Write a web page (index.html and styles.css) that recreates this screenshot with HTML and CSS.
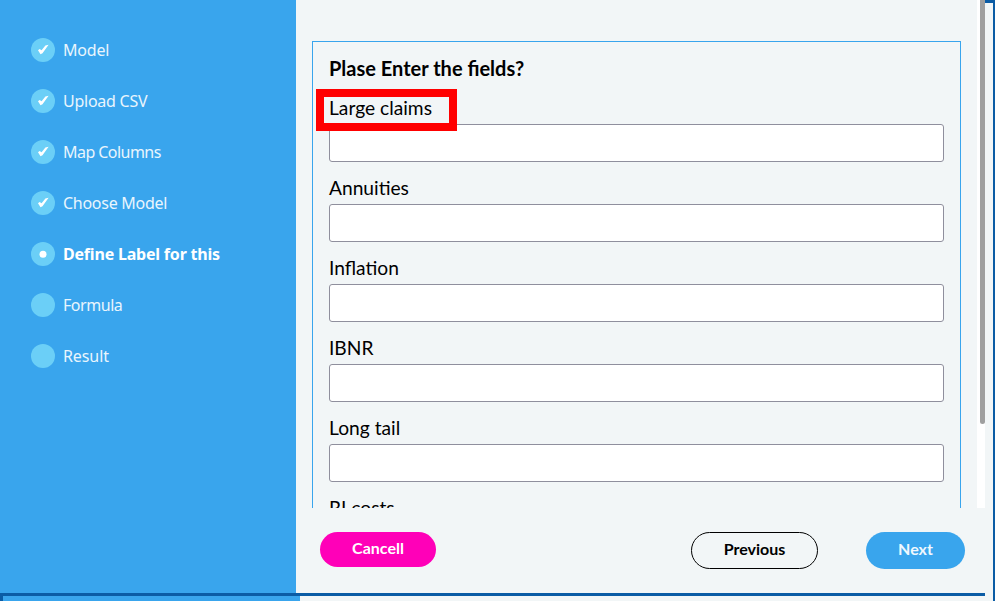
FILE: index.html
```html
<!DOCTYPE html>
<html lang="en">
<head>
<meta charset="utf-8">
<title>Define Label</title>
<link rel="stylesheet" href="styles.css">
</head>
<body>
<div class="page">
  <div class="wizard">
    <nav class="steps">
      <div class="step"><span class="dot"><svg viewBox="0 0 24 24"><path d="M7 12.2 8.6 11 10.6 12.2 14.4 7.4 17.6 6.8 11.5 15.2 9.5 16.2Z"/></svg></span><span class="name n1">Model</span></div>
      <div class="step"><span class="dot"><svg viewBox="0 0 24 24"><path d="M7 12.2 8.6 11 10.6 12.2 14.4 7.4 17.6 6.8 11.5 15.2 9.5 16.2Z"/></svg></span><span class="name n2">Upload CSV</span></div>
      <div class="step"><span class="dot"><svg viewBox="0 0 24 24"><path d="M7 12.2 8.6 11 10.6 12.2 14.4 7.4 17.6 6.8 11.5 15.2 9.5 16.2Z"/></svg></span><span class="name n3">Map Columns</span></div>
      <div class="step"><span class="dot"><svg viewBox="0 0 24 24"><path d="M7 12.2 8.6 11 10.6 12.2 14.4 7.4 17.6 6.8 11.5 15.2 9.5 16.2Z"/></svg></span><span class="name n4">Choose Model</span></div>
      <div class="step current"><span class="dot"><svg viewBox="0 0 24 24"><circle cx="12" cy="12.3" r="3.5"/></svg></span><span class="name n5">Define Label for this</span></div>
      <div class="step"><span class="dot"></span><span class="name n6">Formula</span></div>
      <div class="step"><span class="dot"></span><span class="name n7">Result</span></div>
    </nav>
    <main class="main">
      <div class="viewport">
        <form class="panel">
          <h1>Plase Enter the fields?</h1>
          <div class="field"><label for="f1">Large claims</label><input id="f1" type="text"><span class="mark"></span></div>
          <div class="field"><label for="f2">Annuities</label><input id="f2" type="text"></div>
          <div class="field"><label for="f3">Inflation</label><input id="f3" type="text"></div>
          <div class="field"><label for="f4">IBNR</label><input id="f4" type="text"></div>
          <div class="field"><label for="f5">Long tail</label><input id="f5" type="text"></div>
          <div class="field"><label for="f6">RI costs</label><input id="f6" type="text"></div>
        </form>
        <div class="track"><div class="thumb"></div></div>
      </div>
      <footer class="actions">
        <button class="cancel" type="button">Cancell</button>
        <button class="previous" type="button">Previous</button>
        <button class="next" type="button">Next</button>
      </footer>
    </main>
  </div>
  <div class="edge"></div>
  <div class="below"><div class="below-side"></div></div>
</div>
</body>
</html>
```
FILE: styles.css
```css
* { box-sizing: border-box; }
body { margin: 0; background: #f2f6f7; font-family: Lato, sans-serif; color: #000; }
.page { display: grid; grid-template-columns: 985px 10px; grid-template-rows: 596px 5px; height: 601px; overflow: hidden; }
.wizard { display: grid; grid-template-columns: 296px 1fr; border-bottom: 3px solid #0b5ca5; }
.edge { border-top: 3px solid #0b5ca5; border-right: 2px solid #0b5ca5; }
.below { grid-column: 1 / 3; border-right: 2px solid #0b5ca5; }
.below-side { width: 300px; height: 5px; background: #39a5ed; border-left: 3px solid #0b5ca5; }
.steps { background: #39a5ed; padding: 38px 0 0 31px; display: flex; flex-direction: column; gap: 27px; }
.step { display: flex; align-items: center; gap: 8px; height: 24px; color: #e9f5fd; font: 16px/24px "Noto Sans", sans-serif; white-space: nowrap; }
.current { color: #fff; font-weight: 700; }
.n1 { letter-spacing: -0.2px; }
.n2 { letter-spacing: -0.25px; }
.n3 { letter-spacing: -0.55px; }
.n4 { letter-spacing: -0.27px; }
.n5 { letter-spacing: -0.2px; }
.n6 { letter-spacing: -0.45px; }
.n7 { letter-spacing: -0.1px; }
.dot { width: 24px; height: 24px; border-radius: 50%; background: #6bcff7; }
.dot svg { display: block; width: 24px; height: 24px; fill: #fff; }
.main { display: grid; grid-template-rows: 508px 85px; }
.viewport { display: flex; height: 508px; overflow: hidden; padding: 41px 0 0 16px; }
.panel { width: 649px; height: 560px; flex: none; border: 1px solid #39a5ed; padding: 11px 16px; }
.panel h1 { margin: 0 0 1px; font-size: 20px; line-height: 30px; font-weight: 700; white-space: nowrap; }
.field { position: relative; height: 80px; }
.field label { display: block; height: 40px; padding-top: 9px; font-size: 19.2px; line-height: 30px; white-space: nowrap; }
.field input { display: block; width: 615px; height: 38px; border: 1px solid #8f8f9d; border-radius: 3px; background: #fff; padding: 0 8px; }
.mark { position: absolute; left: -13px; top: 5px; width: 141px; height: 42px; border: 8px solid #f00; }
.track { width: 8px; height: 508px; margin: -41px 0 0 16px; padding-left: 3px; background: #fff; }
.thumb { width: 5px; height: 424px; background: #9f9f9f; border-radius: 0 0 3px 3px; }
.actions { display: flex; align-items: flex-start; padding: 24px 20px 0 24px; }
button { border: 0; padding: 0 0 3px; font: 700 16px/32px Lato, sans-serif; }
.cancel { width: 116px; height: 35px; border-radius: 18px; background: #ff00b8; color: #fff; margin-right: auto; }
.previous { width: 127px; height: 37px; border: 1px solid #000; border-radius: 19px; background: transparent; color: #000; margin-right: 48px; }
.next { width: 99px; height: 37px; border-radius: 19px; background: #39a5ed; color: #f0f8fe; }
```
